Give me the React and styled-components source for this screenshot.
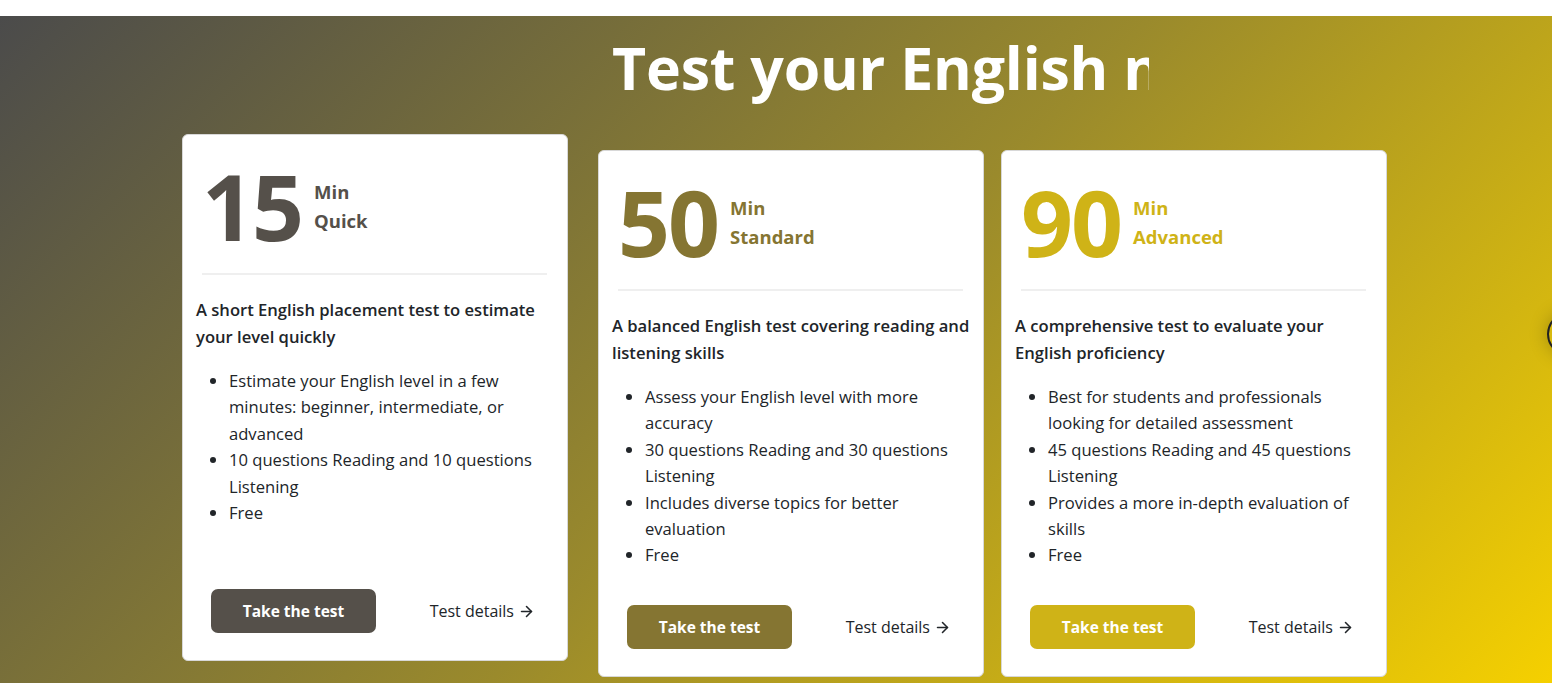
import styled, { createGlobalStyle } from "styled-components";
import { ArrowRight } from "lucide-react";

const GlobalStyle = createGlobalStyle`
  * { box-sizing: border-box; }
  body {
    margin: 0;
    font-family: "Open Sans", "Noto Sans", sans-serif;
    color: #212529;
    background: #fff;
  }
`;

const tests = [
  {
    minutes: "15",
    level: "Quick",
    color: "#55504a",
    raised: true,
    title: "A short English placement test to estimate your level quickly",
    points: [
      "Estimate your English level in a few minutes: beginner, intermediate, or advanced",
      "10 questions Reading and 10 questions Listening",
      "Free",
    ],
  },
  {
    minutes: "50",
    level: "Standard",
    color: "#857532",
    title: "A balanced English test covering reading and listening skills",
    points: [
      "Assess your English level with more accuracy",
      "30 questions Reading and 30 questions Listening",
      "Includes diverse topics for better evaluation",
      "Free",
    ],
  },
  {
    minutes: "90",
    level: "Advanced",
    color: "#cfb317",
    title: "A comprehensive test to evaluate your English proficiency",
    points: [
      "Best for students and professionals looking for detailed assessment",
      "45 questions Reading and 45 questions Listening",
      "Provides a more in-depth evaluation of skills",
      "Free",
    ],
  },
];

const Page = styled.div`
  padding-top: 16px;
  background: #fff;
`;

const Hero = styled.section`
  position: relative;
  height: 667px;
  overflow: hidden;
  background: linear-gradient(135deg, #4b4b4b 0%, #9a8a2c 52%, #f5d000 100%);
`;

const TitleRow = styled.div`
  padding: 11px 0 0 612px;
`;

// typing effect, caught mid-way
const Title = styled.h1`
  margin: 0;
  width: 537px;
  overflow: hidden;
  white-space: nowrap;
  font-size: 59px;
  line-height: 80px;
  font-weight: 700;
  color: #fff;
  letter-spacing: -0.2px;
`;

const CardRow = styled.div`
  display: flex;
  align-items: flex-start;
  gap: 17px;
  padding: 43px 0 0 195px;
`;

const Card = styled.article`
  display: flex;
  flex-direction: column;
  width: 386px;
  height: 527px;
  padding: 0 7px 0 13px;
  background: #fff;
  border: 1px solid #d8d8d8;
  border-radius: 6px;
  transform: ${(p) => (p.$raised ? "translate(-13px, -16px)" : "none")};
`;

const Head = styled.div`
  display: flex;
  align-items: flex-start;
  gap: 12px;
  padding: 26px 6px 0;
  color: ${(p) => p.$color};
`;

const Minutes = styled.div`
  font-size: 91px;
  line-height: 1;
  font-weight: 700;
  letter-spacing: -2px;
`;

const Level = styled.div`
  margin-top: 16px;
  font-size: 18.5px;
  line-height: 29px;
  font-weight: 700;
`;

const Divider = styled.hr`
  margin: 21px 13px 0 6px;
  border: 0;
  border-top: 2px solid #efefef;
`;

const Desc = styled.p`
  margin: 21px 0 0;
  font-size: 16.6px;
  line-height: 27px;
  font-weight: 600;
`;

const Points = styled.ul`
  margin: 18px 6px 0 0;
  padding-left: 33px;
  font-size: 16.6px;
  line-height: 26.4px;
  font-weight: 400;
`;

const Footer = styled.div`
  display: flex;
  align-items: center;
  justify-content: space-between;
  margin-top: auto;
  padding: 0 25px 27px 15px;
`;

const TakeButton = styled.button`
  width: 165px;
  height: 44px;
  border: 0;
  border-radius: 7px;
  background: ${(p) => p.$color};
  color: #fff;
  font-family: inherit;
  font-size: 15.5px;
  font-weight: 700;
  cursor: pointer;
`;

const DetailsLink = styled.a`
  display: flex;
  align-items: center;
  gap: 4px;
  color: #212529;
  font-size: 16px;
  text-decoration: none;
`;

const NextButton = styled.button`
  position: absolute;
  left: 1547px;
  top: 296px;
  width: 44px;
  height: 44px;
  border-radius: 50%;
  border: 2px solid #222;
  background: transparent;
  box-shadow: 0 0 18px rgba(0, 0, 0, 0.25);
`;

function TestCard({ test }) {
  return (
    <Card $raised={test.raised}>
      <Head $color={test.color}>
        <Minutes>{test.minutes}</Minutes>
        <Level>
          <div>Min</div>
          <div>{test.level}</div>
        </Level>
      </Head>
      <Divider />
      <Desc>{test.title}</Desc>
      <Points>
        {test.points.map((point) => (
          <li key={point}>{point}</li>
        ))}
      </Points>
      <Footer>
        <TakeButton $color={test.color}>Take the test</TakeButton>
        <DetailsLink href="#">
          Test details <ArrowRight size={17} strokeWidth={2.2} />
        </DetailsLink>
      </Footer>
    </Card>
  );
}

export default function App() {
  return (
    <Page>
      <GlobalStyle />
      <Hero>
        <TitleRow>
          <Title>Test your English now</Title>
        </TitleRow>
        <CardRow>
          {tests.map((test) => (
            <TestCard key={test.minutes} test={test} />
          ))}
        </CardRow>
        <NextButton aria-label="Next" />
      </Hero>
    </Page>
  );
}
